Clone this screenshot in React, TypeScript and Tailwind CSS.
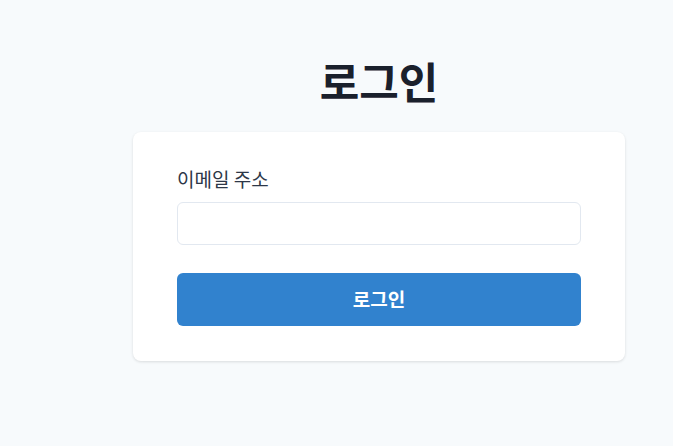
import React from 'react';

const App: React.FC = () => {
  return (
    <div
      className="min-h-[446px] w-full bg-[#f7fafc] pl-[133px] pr-[48px] pt-[50px]"
      style={{ fontFamily: '"Noto Sans CJK KR", "Noto Sans", sans-serif' }}
    >
      <h1 className="text-center text-[43px] font-bold leading-[60px] text-[#1a202c]">로그인</h1>
      <div className="mt-[22px] rounded-lg bg-white px-[44px] pt-[34px] pb-[35px] shadow-[0_1px_3px_rgba(0,0,0,0.12)]">
        <label className="block text-[19px] leading-[26px] text-[#2d3748]">이메일 주소</label>
        <input
          type="email"
          className="mt-[10px] block h-[43px] w-full rounded-md border border-[#e2e8f0] bg-white px-3 outline-none"
        />
        <button className="mt-[28px] flex h-[53px] w-full items-center justify-center rounded-md bg-[#3182ce] text-[19px] font-bold text-white">
          로그인
        </button>
      </div>
    </div>
  );
};

export default App;
